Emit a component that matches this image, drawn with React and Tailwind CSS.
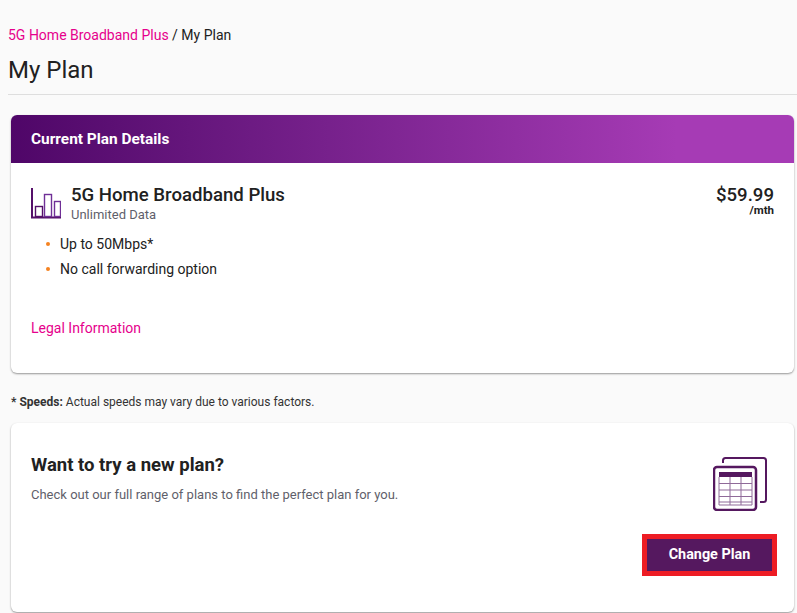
const font = { fontFamily: "Roboto, sans-serif" };

const ChartIcon = () => (
  <svg width="30" height="31" viewBox="0 0 30 31" fill="none" className="shrink-0">
    <path d="M1 0V29.5H30" stroke="#55106a" strokeWidth="2" />
    <rect x="4.5" y="18.5" width="7" height="10" stroke="#55106a" strokeWidth="1.4" />
    <rect x="13.5" y="6.5" width="7" height="22" stroke="#6f2f96" strokeWidth="1.4" />
    <rect x="23.5" y="13.5" width="6" height="15" stroke="#6f2f96" strokeWidth="1.4" />
  </svg>
);

const TableIcon = () => (
  <svg width="54" height="54" viewBox="0 0 54 54" fill="none">
    <path d="M10 6V3.5C10 2 11 1 12.5 1H50.5C52 1 53 2 53 3.5V42.5C53 44 52 45 50.5 45H47" stroke="#55185f" strokeWidth="2" />
    <rect x="1" y="10" width="42" height="43" rx="3" fill="#fff" stroke="#55185f" strokeWidth="2.5" />
    <rect x="6" y="15" width="33" height="5" fill="#55185f" />
    <path d="M6 20V48H39V20M6 26.5H39M6 33H39M6 39.5H39M6 45H39M17 20V48M28 20V48" stroke="#8f6a99" />
  </svg>
);

export default function App() {
  return (
    <div style={font} className="bg-[#fafafa] h-[613px] overflow-hidden text-[#212121]">
      <div className="pt-[27px] pl-2 pr-0">
        <div className="text-sm leading-4">
          <a className="text-[#e6008c]">5G Home Broadband Plus</a> / My Plan
        </div>
        <h1 className="text-2xl leading-8 mt-[11px] pb-2 border-b border-[#dedede]">My Plan</h1>
      </div>

      <div className="ml-[11px] mr-[3px] mt-5 bg-white rounded-md shadow-[0_1px_2px_rgba(0,0,0,0.4)]">
        <div className="h-12 pt-px rounded-t-md flex items-center px-5 bg-gradient-to-r from-[#4f0668] to-[#a63bb5] to-[85%] text-white font-bold text-[15.4px]">
          Current Plan Details
        </div>
        <div className="h-[210px] px-5 pt-[22px]">
          <div className="flex justify-between">
            <div className="flex gap-2.5">
              <div className="pt-[3px]"><ChartIcon /></div>
              <div>
                <div className="text-[18.6px] leading-5 font-medium">5G Home Broadband Plus</div>
                <div className="text-[13px] leading-4 mt-[2px] text-[#5f5f6b]">Unlimited Data</div>
              </div>
            </div>
            <div className="text-right">
              <div className="text-[18.6px] leading-5 font-medium">$59.99</div>
              <div className="text-[11.5px] leading-3 -mt-[1px] font-bold">/mth</div>
            </div>
          </div>
          <ul className="mt-2 text-sm">
            <li className="flex items-center h-[25px]">
              <span className="w-1 h-1 rounded-full bg-[#f58220] ml-[15px] mr-[10px]"></span>Up to 50Mbps*
            </li>
            <li className="flex items-center h-[25px]">
              <span className="w-1 h-1 rounded-full bg-[#f58220] ml-[15px] mr-[10px]"></span>No call forwarding option
            </li>
          </ul>
          <a className="block mt-[37px] text-sm leading-5 text-[#e6008c]">Legal Information</a>
        </div>
      </div>

      <p className="mx-[11px] mt-[21px] text-xs leading-4 text-[#333]">
        <b>* Speeds:</b> Actual speeds may vary due to various factors.
      </p>

      <div className="ml-[11px] mr-[3px] mt-[13px] h-[189px] bg-white rounded-md shadow-[0_1px_2px_rgba(0,0,0,0.4)] pl-5 pr-[17px] pt-[32px]">
        <div className="flex justify-between">
          <div>
            <h2 className="text-[18.5px] leading-5 font-bold">Want to try a new plan?</h2>
            <p className="mt-3 text-[13px] leading-4 text-[#5f5f6b]">
              Check out our full range of plans to find the perfect plan for you.
            </p>
          </div>
          <div className="mt-[2px] mr-[10px]"><TableIcon /></div>
        </div>
        <div className="flex justify-end mt-[23px]">
          <button className="w-[135px] h-[42px] border-[5px] border-[#ed1c24] bg-[#55185f] text-white text-[14.4px] font-bold">
            Change Plan
          </button>
        </div>
      </div>
    </div>
  );
}
